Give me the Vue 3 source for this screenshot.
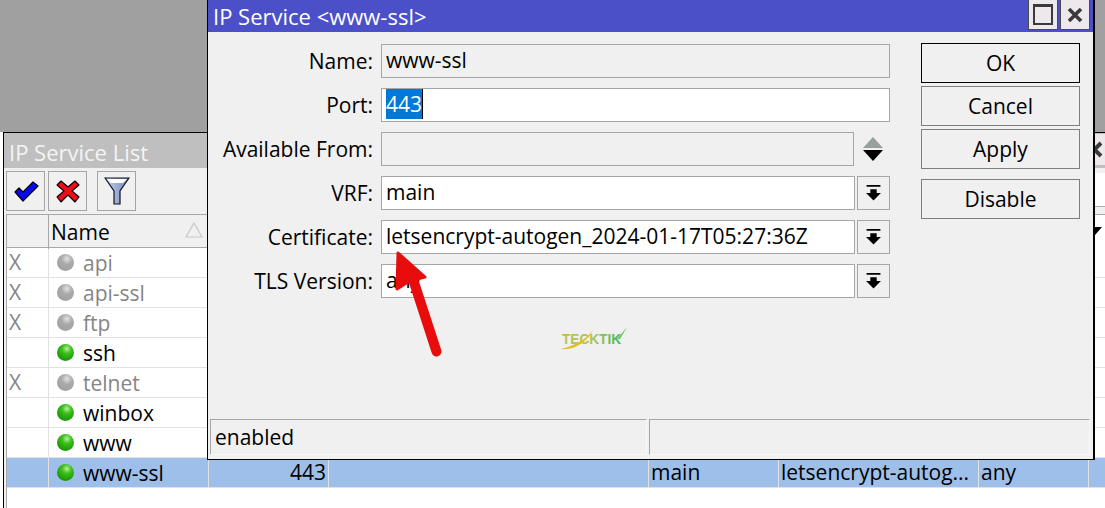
<script setup>
const columns = [
  { key: 'flag', text: '' }, { key: 'name', text: 'Name', sort: true }, { key: 'port', text: '' }, { key: 'from', text: '' },
  { key: 'vrf', text: '' }, { key: 'cert', text: '' }, { key: 'tls', text: '' }, { key: 'end', text: '', menu: true }
]
const services = [
  { name: 'api', off: true }, { name: 'api-ssl', off: true }, { name: 'ftp', off: true }, { name: 'ssh' },
  { name: 'telnet', off: true }, { name: 'winbox' }, { name: 'www' },
  { name: 'www-ssl', selected: true, port: '443', vrf: 'main', cert: 'letsencrypt-autog...', tls: 'any' }
]
const fields = [
  { label: 'Name:', value: 'www-ssl', kind: 'readonly' },
  { label: 'Port:', value: '443', kind: 'selected' },
  { label: 'Available From:', value: '', kind: 'updown' },
  { label: 'VRF:', value: 'main', kind: 'drop' },
  { label: 'Certificate:', value: 'letsencrypt-autogen_2024-01-17T05:27:36Z', kind: 'drop' },
  { label: 'TLS Version:', value: 'any', kind: 'drop' }
]
const buttons = ['OK', 'Cancel', 'Apply']
</script>

<template>
  <div class="desktop">
    <section class="window list">
      <header class="list-title">
        <span>IP Service List</span>
        <span class="list-close"><svg width="20" height="20" viewBox="0 0 20 20"><path d="M3 3 L16 16 M16 3 L3 16" stroke="#3a3a3a" stroke-width="4" /></svg></span>
      </header>
      <div class="toolbar">
        <button class="tool">
          <svg width="26" height="24" viewBox="0 0 26 24"><path d="M2 13 L6 9 L10 13 L20 3 L25 7 L10 22 Z" fill="#0a0af0" stroke="#000" stroke-width="1.2" stroke-linejoin="round" /></svg>
        </button>
        <button class="tool">
          <svg width="24" height="24" viewBox="0 0 24 24"><path d="M5 2 L12 8 L19 2 L23 6 L16 12 L23 18 L19 23 L12 16 L5 23 L1 18 L8 12 L1 6 Z" fill="#f00c18" stroke="#000" stroke-width="1.1" stroke-linejoin="round" /></svg>
        </button>
        <button class="tool gap">
          <svg width="26" height="28" viewBox="0 0 26 28">
            <defs><linearGradient id="fun" x1="0" x2="1" y1="0" y2="0"><stop offset="0" stop-color="#c9d4ee" /><stop offset="1" stop-color="#6f86bd" /></linearGradient></defs>
            <path d="M1 1 H25 L16 14 V27 H10 V14 Z" fill="url(#fun)" stroke="#10131c" stroke-width="1.2" />
            <path d="M3 2 H23 L19 6 H7 Z" fill="#fff" />
          </svg>
        </button>
        <span class="search"></span>
      </div>
      <div class="table">
        <div class="head grid">
          <div v-for="c in columns" :key="c.key" class="hcell" :class="c.key">
            {{ c.text }}
            <svg v-if="c.sort" class="sort" width="18" height="16" viewBox="0 0 18 16"><path d="M9 1 L17 15 H1 Z" fill="none" stroke="#c8c8c8" stroke-width="1.2" /></svg>
            <span v-if="c.menu" class="menu-mark"></span>
          </div>
        </div>
        <div v-for="s in services" :key="s.name" class="row grid" :class="{ off: s.off, selected: s.selected }">
          <div class="cell flag">{{ s.off ? 'X' : '' }}</div>
          <div class="cell name"><i class="led"></i>{{ s.name }}</div>
          <div class="cell port">{{ s.port }}</div>
          <div class="cell"></div>
          <div class="cell">{{ s.vrf }}</div>
          <div class="cell">{{ s.cert }}</div>
          <div class="cell">{{ s.tls }}</div>
          <div class="cell"></div>
        </div>
      </div>
    </section>

    <section class="window dialog">
      <header class="dlg-title">
        <span>IP Service &lt;www-ssl&gt;</span>
        <div class="caps">
          <span class="cap"><i class="max"></i></span>
          <span class="cap"><svg width="20" height="20" viewBox="0 0 20 20"><path d="M4 4 L16 16 M16 4 L4 16" stroke="#3a3a3a" stroke-width="3.6" /></svg></span>
        </div>
      </header>
      <div class="dlg-body">
        <div class="form">
          <div v-for="f in fields" :key="f.label" class="field">
            <label>{{ f.label }}</label>
            <div class="control">
              <div class="input" :class="{ ro: f.kind === 'readonly' || f.kind === 'updown', short: f.kind === 'updown' }">
                <mark v-if="f.kind === 'selected'">{{ f.value }}</mark><template v-else>{{ f.value }}</template>
              </div>
              <span v-if="f.kind === 'updown'" class="updown"><i class="up"></i><i class="down"></i></span>
              <span v-if="f.kind === 'drop'" class="drop">
                <svg width="17" height="18" viewBox="0 0 16 16"><path d="M1.5 0.5 H14.500 V2 H1.500 Z M5 4.500 H11 V8 H15 L8 15 L1 8 H5 Z" fill="#000" /></svg>
              </span>
            </div>
          </div>
        </div>
        <div class="actions">
          <button v-for="b in buttons" :key="b" class="act" :class="{ primary: b === 'OK' }">{{ b }}</button>
          <button class="act spaced">Disable</button>
        </div>
      </div>
      <svg class="logo" width="70" height="28" viewBox="0 0 70 28">
        <defs><linearGradient id="tek" x1="0" x2="1" y1="0" y2="0"><stop offset="0" stop-color="#b9c24a" /><stop offset="0.5" stop-color="#a9c65a" /><stop offset="1" stop-color="#45b85a" /></linearGradient></defs>
        <text x="3" y="20" font-family="Liberation Sans, sans-serif" font-size="15" font-weight="700" fill="url(#tek)" textLength="59" lengthAdjust="spacingAndGlyphs">TECKTIK</text>
        <path d="M2 25 C15 27 29 17 34 6 C28 15 15 22 2 25 Z" fill="#e0bd20" />
        <path d="M58 15 L68 3 L61 15 Z" fill="#6cc35f" />
      </svg>
      <footer class="status">
        <div class="pane first">enabled</div>
        <div class="pane"></div>
      </footer>
    </section>

    <svg class="arrow" width="70" height="120" viewBox="0 0 70 120">
      <path d="M7 2 L34 26 L22 29 L17 31 L6 38 Z" fill="#e80c0c" stroke="#e80c0c" stroke-width="3" stroke-linejoin="round" />
      <path d="M19 19 L45.500 100.500" stroke="#e80c0c" stroke-width="10" stroke-linecap="round" />
    </svg>
  </div>
</template>

<style scoped>
.desktop {
  position: relative;
  width: 1105px;
  height: 508px;
  overflow: hidden;
  background: linear-gradient(#a0a0a0 132px, #fff 132px);
  font-family: "Open Sans", "Noto Sans", sans-serif;
  font-size: 21px;
  color: #000;
}
.window { position: absolute; box-sizing: border-box; }
.list {
  left: 3px; top: 132px; width: 1120px; height: 380px;
  border-left: 1px solid #000; border-top: 1px solid #000;
  background: #f0f0f0;
}
.list-title {
  height: 35px; background: #bfbfbf; color: #f4f4f4;
  padding-left: 5px; font-size: 22px; line-height: 38px; position: relative;
}
.list-close {
  position: absolute; left: 1088px; top: 1px; width: 30px; height: 31px;
  background: #ece8ec; display: flex; align-items: center; overflow: hidden;
}
.list-close svg { margin-left: -7px; flex: none; }
.toolbar {
  display: flex; height: 39px; padding: 3px 0 0 2px; gap: 3px; position: relative;
}
.tool {
  width: 39px; height: 40px; padding: 0; box-sizing: border-box;
  background: #f0f0f0; border: 1px solid #a4a4a4;
  display: flex; align-items: center; justify-content: center;
}
.tool.gap { margin-left: 7px; }
.search {
  position: absolute; left: 1088px; top: 5px; width: 30px; height: 33px;
  background: #fff; border-bottom: 1px solid #aaa;
}
.table {
  margin: 4px 0 0 2px; height: 300px; background: #fff;
  border-left: 1px solid #a8a8a8;
}
.grid { display: grid; grid-template-columns: 42px 160px 120px 320px 130px 200px 110px 1fr; }
.head { height: 34px; border-top: 1px solid #a8a8a8; border-bottom: 1px solid #a8a8a8; box-sizing: border-box; background: #f0f0f0; }
.hcell {
  position: relative; border-right: 1px solid #a8a8a8; padding-left: 2px; line-height: 34px; min-width: 0;
}
.hcell.end { background: #fff; border-right: 0; }
.sort { position: absolute; left: 136px; top: 7px; }
.menu-mark {
  position: absolute; left: 0; top: 12px; width: 0; height: 0;
  border-left: 7px solid #000; border-bottom: 8px solid transparent; margin-left: 6px;
}
.row { height: 30px; box-sizing: border-box; border-bottom: 1px solid #e2e2e2; line-height: 28px; }
.row.off { color: #858585; }
.row.selected { background: #9dbfe9; }
.cell {
  border-right: 1px solid #e2e2e2; padding: 0 2px; white-space: nowrap; overflow: hidden; min-width: 0;
}
.cell.flag { padding-left: 2px; }
.cell.name { display: flex; align-items: center; gap: 10px; padding-left: 8px; line-height: 28px; }
.cell.port { text-align: right; padding-right: 2px; }
.led {
  flex: none; width: 17px; height: 17px; margin-right: -1px; border-radius: 50%;
  background: radial-gradient(circle at 58% 28%, #b8f0a0 0, #3dc01c 30%, #1f9a08 70%, #178006 100%);
}
.off .led { background: radial-gradient(circle at 58% 28%, #e2e2e2 0, #aaa 35%, #9c9c9c 100%); }

.dialog {
  left: 207px; top: 0; width: 888px; height: 460px;
  border: 1px solid #000; border-top: 0; border-right-width: 2px; background: #f0f0f0;
  display: flex; flex-direction: column;
}
.dlg-title {
  height: 32px; background: #4c50c8; color: #fff; flex: none;
  display: flex; justify-content: space-between;
  font-size: 22px; line-height: 33px; padding-left: 5px;
}
.caps { display: flex; gap: 2px; padding-right: 3px; }
.cap {
  width: 30px; height: 30px; box-sizing: border-box; background: #ece8ec;
  border: 1px solid #4a4a4a; border-top: 0;
  display: flex; align-items: center; justify-content: center;
}
.max { width: 16px; height: 16px; border: 2px solid #3a3a3a; border-top-width: 3px; }
.dlg-body { flex: 1; display: flex; padding: 11px 0 0 0; min-height: 0; }
.form { width: 682px; display: flex; flex-direction: column; gap: 10px; padding-top: 1px; }
.field { display: flex; height: 34px; align-items: center; }
.field label { width: 173px; text-align: right; padding-right: 8px; box-sizing: border-box; flex: none; }
.control { flex: 1; display: flex; gap: 2px; height: 34px; min-width: 0; }
.input {
  flex: 1; box-sizing: border-box; background: #fff; border: 1px solid #a6a6a6;
  padding-left: 4px; line-height: 31px; white-space: nowrap; overflow: hidden;
}
.input.ro { background: #f0f0f0; }
.input.short { flex: none; width: 473px; }
mark { background: #0078d7; color: #fff; display: inline-block; line-height: 30px; height: 30px; vertical-align: top; border-right: 1px solid #000; }
.drop {
  flex: none; width: 33px; box-sizing: border-box; border: 1px solid #a6a6a6; background: #f0f0f0;
  display: flex; align-items: center; justify-content: center;
}
.updown { display: flex; flex-direction: column; gap: 2px; align-items: center; margin: 5px 0 0 7px; }
.updown i { width: 0; height: 0; border-left: 10px solid transparent; border-right: 10px solid transparent; }
.up { border-bottom: 11px solid #97a09a; }
.down { border-top: 11px solid #000; }
.actions { display: flex; flex-direction: column; gap: 3px; padding: 0 0 0 31px; }
.act {
  width: 159px; height: 40px; box-sizing: border-box; padding: 0; background: #f0f0f0;
  border: 1px solid #7e7e7e; font: inherit; color: #000;
}
.act.primary { border-color: #000; }
.act.spaced { margin-top: 7px; }
.logo { position: absolute; left: 351px; top: 324px; }
.status { flex: none; display: flex; gap: 2px; height: 36px; margin: 0 3px 4px 2px; }
.pane {
  flex: 1; box-sizing: border-box; border: 1px solid #a6a6a6; border-bottom-color: #f8f8f8; border-right-color: #f8f8f8;
  padding-left: 4px; line-height: 35px;
}
.pane.first { flex: none; width: 437px; }
.arrow { position: absolute; left: 391px; top: 251px; }
</style>
